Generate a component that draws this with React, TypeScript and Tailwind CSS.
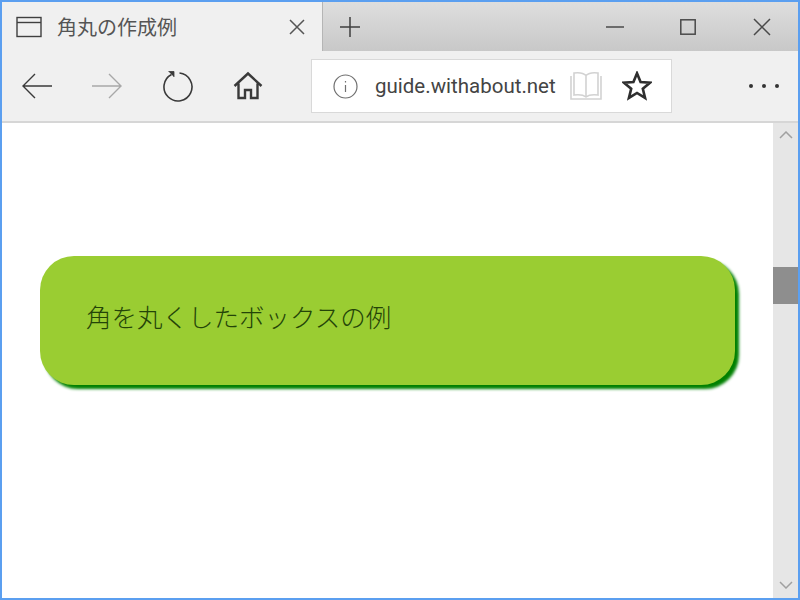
import React from 'react';

const iconStroke = '#3a3a3a';

const App: React.FC = () => {
  return (
    <div className="w-[800px] h-[600px] overflow-hidden flex flex-col border-2 border-[#5b9ff0] bg-white font-['Noto_Sans','Noto_Sans_CJK_JP',sans-serif]">
      {/* Tab strip */}
      <div className="h-[49px] flex bg-gradient-to-b from-[#dedede] to-[#c8c8c8] shrink-0">
        <div className="w-[321px] flex items-center bg-[#f0f0f0] pl-[14px] pr-[16px] border-r border-[#b5b5b5]">
          <svg width="26" height="22" viewBox="0 0 26 22" fill="none" stroke="#3f3f3f" strokeWidth="1.4">
            <rect x="1" y="1.5" width="24" height="19" />
            <path d="M1 6.5h24" />
          </svg>
          <span className="ml-[15px] text-[20px] leading-none text-[#555555] font-['Noto_Sans_CJK_JP',sans-serif]">角丸の作成例</span>
          <svg className="ml-auto" width="18" height="18" viewBox="0 0 18 18" fill="none" stroke="#555555" strokeWidth="1.5">
            <path d="M2 2l14 14M16 2L2 16" />
          </svg>
        </div>
        <div className="flex-1 flex items-center pl-[16px]">
          <svg width="22" height="22" viewBox="0 0 22 22" fill="none" stroke="#3f3f3f" strokeWidth="1.5">
            <path d="M11 1v20M1 11h20" />
          </svg>
          <div className="ml-auto flex items-center">
            <svg width="18" height="4" viewBox="0 0 18 4" fill="none" stroke="#4a4a4a" strokeWidth="1.5">
              <path d="M0 2h18" />
            </svg>
            <svg className="ml-[56px]" width="16" height="16" viewBox="0 0 16 16" fill="none" stroke="#4a4a4a" strokeWidth="1.5">
              <rect x="0.8" y="0.8" width="14.4" height="14.4" />
            </svg>
            <svg className="ml-[57px] mr-[27px]" width="18" height="18" viewBox="0 0 18 18" fill="none" stroke="#4a4a4a" strokeWidth="1.5">
              <path d="M1 1l16 16M17 1L1 17" />
            </svg>
          </div>
        </div>
      </div>

      {/* Address bar */}
      <div className="h-[72px] flex items-center bg-[#f0f0f0] border-b-2 border-[#d6d6d6] shrink-0">
        <svg className="ml-[19px]" width="32" height="28" viewBox="0 0 32 28" fill="none" stroke={iconStroke} strokeWidth="1.4">
          <path d="M31 14H2M14 2L2 14l12 12" />
        </svg>
        <svg className="ml-[38px]" width="32" height="28" viewBox="0 0 32 28" fill="none" stroke="#a8a8a8" strokeWidth="1.4">
          <path d="M1 14h29M18 2l12 12-12 12" />
        </svg>
        <svg className="ml-[39px]" width="32" height="32" viewBox="0 0 32 32" fill="none" stroke={iconStroke} strokeWidth="1.6">
          <path d="M9.5 4.5a14 14 0 1 0 8-1.5" />
          <path d="M6.5 1.5h5.5v5.5" fill={iconStroke} strokeWidth="0.8" />
        </svg>
        <svg className="ml-[39px]" width="30" height="30" viewBox="0 0 30 30" fill="none" stroke={iconStroke} strokeWidth="2.4">
          <path d="M1.5 15L15 2.5 28.5 15M5.5 12.5V27H12v-8h6v8h6.5V12.5" />
        </svg>
        <div className="ml-[48px] w-[361px] h-[54px] flex items-center bg-white border border-[#d9d9d9]">
          <svg className="ml-[21px] shrink-0" width="25" height="25" viewBox="0 0 25 25" fill="none" stroke="#707070" strokeWidth="1.2">
            <circle cx="12.5" cy="12.5" r="11.5" />
            <path d="M12.5 11v7M12.5 7v1.6" />
          </svg>
          <div className="ml-[17px] w-[181px] shrink-0 whitespace-nowrap text-[20.5px] leading-none text-[#444444] font-['Roboto',sans-serif]">guide.withabout.net</div>
          <svg className="ml-[14px] shrink-0" width="32" height="30" viewBox="0 0 32 30" fill="none" stroke="#d2d2d2" strokeWidth="1.6">
            <path d="M16 4.5C13 1.5 8 1.5 4 2v22c4-.5 9-.5 12 2 3-2.5 8-2.5 12-2V2c-4-.5-9-.5-12 2.5zM16 4.5V26M1 5v23h30V5" />
          </svg>
          <svg className="ml-[20px] shrink-0" width="30" height="30" viewBox="0 0 32 32" fill="none" stroke="#2f2f2f" strokeWidth="2.8">
            <path d="M16 2.5l3.8 9.2 10 .8-7.6 6.5 2.4 9.7-8.6-5.3-8.6 5.3 2.4-9.7-7.6-6.5 10-.8z" />
          </svg>
        </div>
        <div className="ml-[77px] flex gap-[9px]">
          <div className="w-[4px] h-[4px] rounded-full bg-[#333333]" />
          <div className="w-[4px] h-[4px] rounded-full bg-[#333333]" />
          <div className="w-[4px] h-[4px] rounded-full bg-[#333333]" />
        </div>
      </div>

      {/* Page area */}
      <div className="flex-1 flex min-h-0">
        <div className="flex-1 pt-[133px] pl-[38px]">
          <div className="w-[695px] h-[129px] flex items-center pl-[46px] pb-[9px] rounded-[34px] bg-[#9acd32] shadow-[4px_4px_3px_#008000]">
            <span className="text-[25.5px] leading-none text-[#244408] font-['Noto_Sans_CJK_JP',sans-serif] font-light">角を丸くしたボックスの例</span>
          </div>
        </div>
        <div className="w-[25px] bg-[#e6e6e6] flex flex-col items-center">
          <svg className="mt-[8px] shrink-0" width="14" height="8" viewBox="0 0 14 8" fill="none" stroke="#a0a0a0" strokeWidth="1.5">
            <path d="M1 7l6-6 6 6" />
          </svg>
          <div className="mt-[128px] w-full h-[37px] bg-[#8e8e8e] shrink-0" />
          <svg className="mt-auto mb-[9px] shrink-0" width="14" height="8" viewBox="0 0 14 8" fill="none" stroke="#a0a0a0" strokeWidth="1.5">
            <path d="M1 1l6 6 6-6" />
          </svg>
        </div>
      </div>
    </div>
  );
};

export default App;
